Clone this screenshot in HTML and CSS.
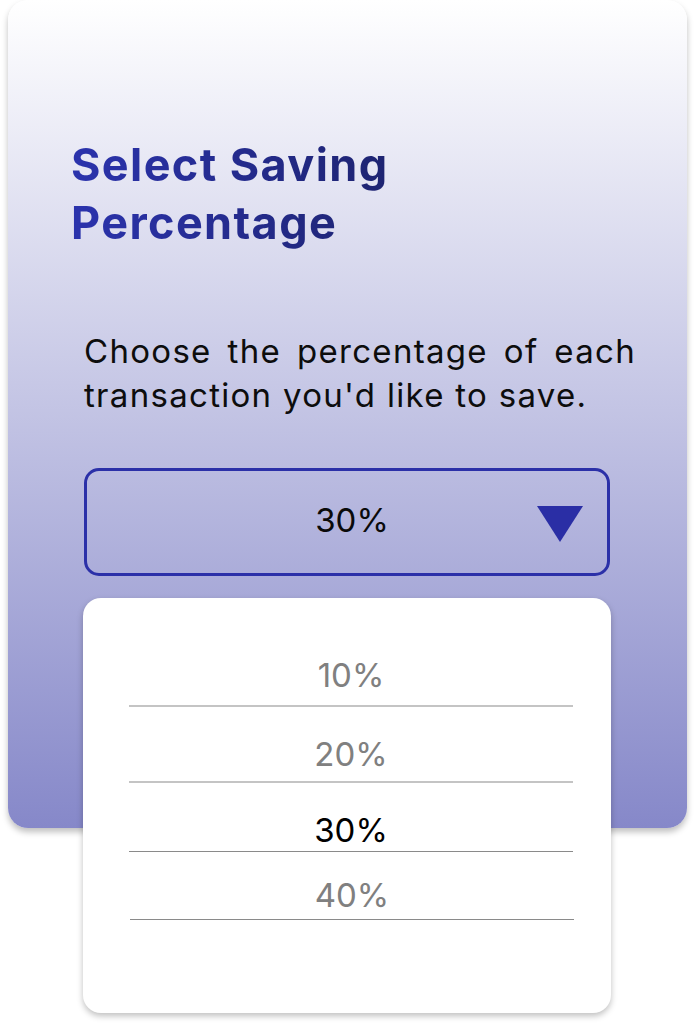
FILE: index.html
```html
<!DOCTYPE html>
<html lang="en">
<head>
<meta charset="utf-8">
<title>Select Saving Percentage</title>
<link rel="stylesheet" href="styles.css">
</head>
<body>
  <main class="card">
    <h1 class="title">Select Saving<br>Percentage</h1>
    <div class="form">
      <p class="desc">Choose the percentage of each transaction you'd like to save.</p>
      <div class="select">
        <span class="select-value">30%</span>
        <svg class="caret" width="46" height="36" viewBox="0 0 46 36" aria-hidden="true">
          <polygon points="0,0 46,0 23,36" fill="#2a2ea5"/>
        </svg>
      </div>
      <ul class="menu">
        <li class="opt opt-1">10%</li>
        <li class="opt opt-2">20%</li>
        <li class="opt opt-3 opt-active">30%</li>
        <li class="opt opt-4">40%</li>
      </ul>
    </div>
  </main>
</body>
</html>
```
FILE: styles.css
```css
html, body {
  margin: 0;
  padding: 0;
  background: #ffffff;
}
body {
  padding: 0 8px;
  font-family: Inter, "Noto Sans", sans-serif;
  min-height: 1023px;
  box-sizing: border-box;
}
.card {
  box-sizing: border-box;
  height: 828px;
  border-radius: 20px;
  background: linear-gradient(180deg, #ffffff 0%, #8688c9 100%);
  box-shadow: 0 4px 6px rgba(0, 0, 0, 0.25);
  padding: 136px 0 0 63px;
}
.title {
  margin: 0;
  font-size: 45px;
  line-height: 58px;
  font-weight: 700;
  letter-spacing: 1.4px;
  background: linear-gradient(90deg, #2b33ad 0%, #1e2471 100%);
  -webkit-background-clip: text;
  background-clip: text;
  color: transparent;
  width: max-content;
}
.form {
  margin-left: 13px;
}
.desc {
  margin: 77px 0 0 0;
  width: 552px;
  font-size: 33px;
  line-height: 44px;
  letter-spacing: 1.3px;
  color: #0d0d0d;
  text-align: justify;
}
.select {
  box-sizing: border-box;
  margin-top: 51px;
  width: 526px;
  height: 108px;
  border: 3px solid #2b30a8;
  border-radius: 15px;
  display: flex;
  align-items: center;
  padding: 4px 24px 0 80px;
}
.select-value {
  flex: 1;
  text-align: center;
  font-size: 33px;
  color: #0a0a0a;
  margin-top: -8px;
}
.caret {
  display: block;
  flex: none;
}
.menu {
  list-style: none;
  box-sizing: border-box;
  margin: 22px 0 0 -1px;
  width: 528px;
  height: 415px;
  padding: 57px 0 0 46px;
  background: #ffffff;
  border-radius: 18px;
  box-shadow: 0 3px 6px rgba(0, 0, 0, 0.25);
}
.opt {
  width: 444px;
  font-size: 33px;
  line-height: 40px;
  text-align: center;
  color: #808080;
}
.opt-1 {
  padding-bottom: 10px;
  border-bottom: 2px solid #c4c4c4;
}
.opt-2 {
  margin-top: 27px;
  padding-bottom: 7px;
  border-bottom: 2px solid #c4c4c4;
}
.opt-3 {
  margin-top: 27px;
  padding-bottom: 1px;
  border-bottom: 1px solid #8a8a8a;
}
.opt-4 {
  margin-top: 23px;
  padding-bottom: 4px;
  border-bottom: 1px solid #8a8a8a;
  margin-left: 1px;
}
.opt-active {
  color: #000000;
}
```
